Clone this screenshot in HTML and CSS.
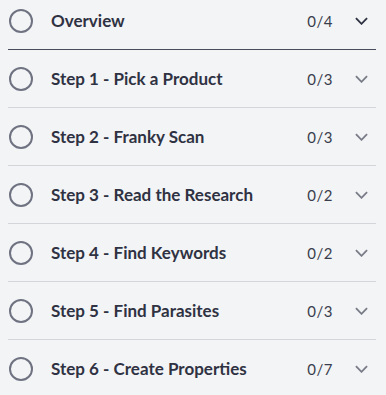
FILE: index.html
```html
<!DOCTYPE html>
<html lang="en">
<head>
  <meta charset="UTF-8">
  <title>Course Steps</title>
  <link rel="stylesheet" href="styles.css">
</head>
<body>
  <ul class="steps">
    <li class="step open">
      <span class="check"></span>
      <span class="title">Overview</span>
      <span class="count">0/4</span>
      <svg class="chev" viewBox="0 0 14 8"><path d="M1 1l6 6 6-6"/></svg>
    </li>
    <li class="step">
      <span class="check"></span>
      <span class="title">Step 1 - Pick a Product</span>
      <span class="count">0/3</span>
      <svg class="chev" viewBox="0 0 14 8"><path d="M1 1l6 6 6-6"/></svg>
    </li>
    <li class="step">
      <span class="check"></span>
      <span class="title">Step 2 - Franky Scan</span>
      <span class="count">0/3</span>
      <svg class="chev" viewBox="0 0 14 8"><path d="M1 1l6 6 6-6"/></svg>
    </li>
    <li class="step">
      <span class="check"></span>
      <span class="title">Step 3 - Read the Research</span>
      <span class="count">0/2</span>
      <svg class="chev" viewBox="0 0 14 8"><path d="M1 1l6 6 6-6"/></svg>
    </li>
    <li class="step">
      <span class="check"></span>
      <span class="title">Step 4 - Find Keywords</span>
      <span class="count">0/2</span>
      <svg class="chev" viewBox="0 0 14 8"><path d="M1 1l6 6 6-6"/></svg>
    </li>
    <li class="step">
      <span class="check"></span>
      <span class="title">Step 5 - Find Parasites</span>
      <span class="count">0/3</span>
      <svg class="chev" viewBox="0 0 14 8"><path d="M1 1l6 6 6-6"/></svg>
    </li>
    <li class="step">
      <span class="check"></span>
      <span class="title">Step 6 - Create Properties</span>
      <span class="count">0/7</span>
      <svg class="chev" viewBox="0 0 14 8"><path d="M1 1l6 6 6-6"/></svg>
    </li>
  </ul>
</body>
</html>
```

FILE: styles.css
```css
body {
  margin: 0;
  background: #f3f4f6;
  font-family: Lato, "Noto Sans", sans-serif;
  color: #2f3242;
  overflow: hidden;
}

.steps {
  list-style: none;
  margin: -8px 10px 0 8px;
  padding: 0;
}

.step {
  display: flex;
  align-items: center;
  height: 57px;
  border-bottom: 1px solid #d3d5da;
}

.step.open {
  border-bottom-color: #4b4e5a;
}

.check {
  width: 20px;
  height: 20px;
  margin-left: 1px;
  border: 2px solid #6f7280;
  border-radius: 50%;
  flex-shrink: 0;
}

.title {
  flex: 1;
  margin-left: 18px;
  font-size: 17px;
  font-weight: 700;
}

.count {
  font-size: 15px;
  letter-spacing: 0.5px;
  color: #3a3d4b;
  margin-right: 22px;
}

.chev {
  width: 13px;
  height: 8px;
  margin-right: 8px;
  fill: none;
  stroke: #7a7d88;
  stroke-width: 2;
}

.open .chev {
  stroke: #2f3242;
}
```
